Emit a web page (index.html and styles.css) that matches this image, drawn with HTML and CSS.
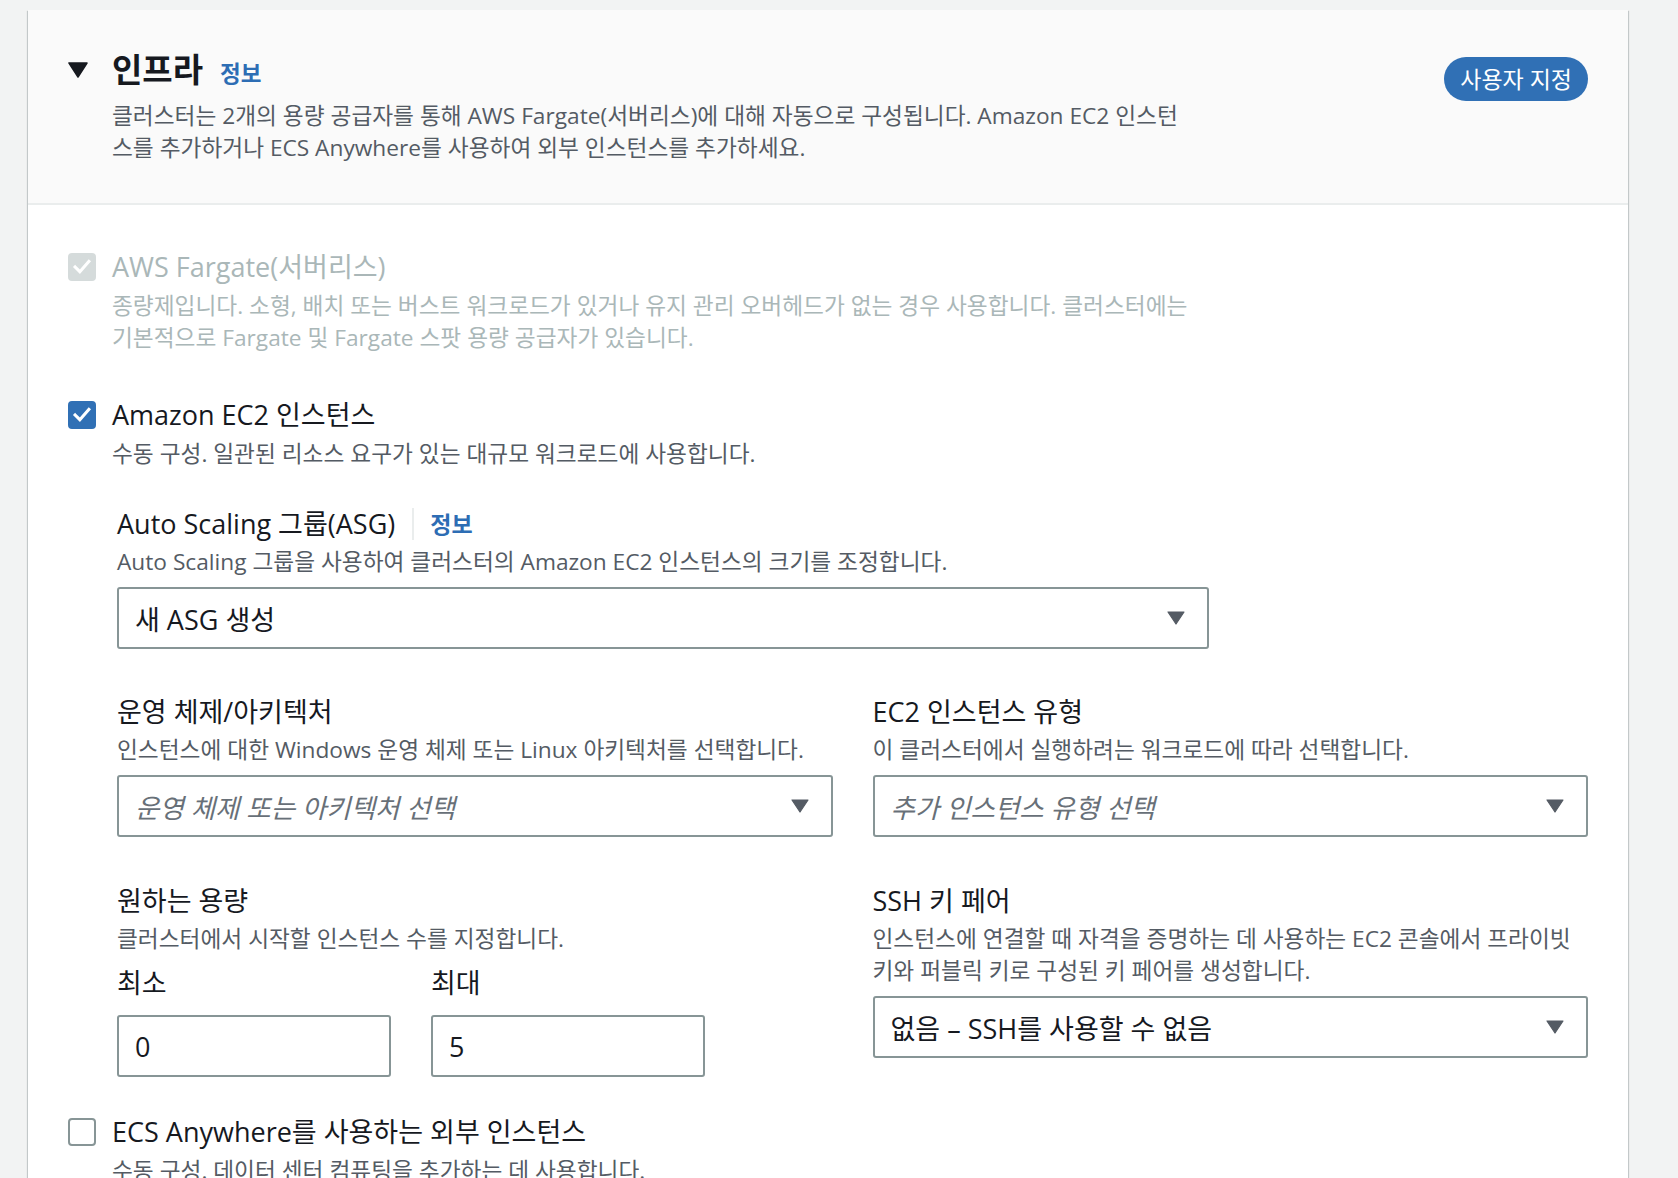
FILE: index.html
```html
<!DOCTYPE html>
<html lang="ko">
<head>
<meta charset="utf-8">
<title>인프라</title>
<link rel="stylesheet" href="styles.css">
</head>
<body>
<div class="page">
  <section class="card">
    <header class="card-header">
      <div class="header-main">
        <svg class="header-caret" width="20" height="16" viewBox="0 0 20 16"><path d="M1 1h18L10 15z" fill="#16191f" stroke="#16191f" stroke-width="1.5" stroke-linejoin="round"/></svg>
        <div class="header-text">
          <div class="title-row">
            <h2 class="title">인프라</h2>
            <a class="info-link info-link-lg">정보</a>
          </div>
          <p class="header-desc">클러스터는 2개의 용량 공급자를 통해 AWS Fargate(서버리스)에 대해 자동으로 구성됩니다. Amazon EC2 인스턴<br>스를 추가하거나 ECS Anywhere를 사용하여 외부 인스턴스를 추가하세요.</p>
        </div>
      </div>
      <span class="badge">사용자 지정</span>
    </header>

    <div class="card-body">
      <div class="option option-disabled">
        <span class="checkbox checkbox-disabled">
          <svg width="28" height="28" viewBox="0 0 28 28"><path d="M6 14l5.5 5.5L22 7.5" fill="none" stroke="#fff" stroke-width="3.6" stroke-linecap="square"/></svg>
        </span>
        <div class="option-content">
          <div class="option-label">AWS Fargate(서버리스)</div>
          <p class="option-desc">종량제입니다. 소형, 배치 또는 버스트 워크로드가 있거나 유지 관리 오버헤드가 없는 경우 사용합니다. 클러스터에는<br>기본적으로 Fargate 및 Fargate 스팟 용량 공급자가 있습니다.</p>
        </div>
      </div>

      <div class="option option-ec2">
        <span class="checkbox checkbox-checked">
          <svg width="28" height="28" viewBox="0 0 28 28"><path d="M6 14l5.5 5.5L22 7.5" fill="none" stroke="#fff" stroke-width="3.6" stroke-linecap="square"/></svg>
        </span>
        <div class="option-content">
          <div class="option-label">Amazon EC2 인스턴스</div>
          <p class="option-desc">수동 구성. 일관된 리소스 요구가 있는 대규모 워크로드에 사용합니다.</p>

          <div class="nested">
            <div class="field field-asg">
              <div class="field-label">Auto Scaling 그룹(ASG)<span class="label-divider"></span><a class="info-link">정보</a></div>
              <p class="field-desc">Auto Scaling 그룹을 사용하여 클러스터의 Amazon EC2 인스턴스의 크기를 조정합니다.</p>
              <div class="select select-asg">
                <span class="select-value">새 ASG 생성</span>
                <svg class="select-caret" width="18" height="14" viewBox="0 0 18 14"><path d="M1 1h16L9 13z" fill="#545b64" stroke="#545b64" stroke-width="1.2" stroke-linejoin="round"/></svg>
              </div>
            </div>

            <div class="field-grid">
              <div class="field">
                <div class="field-label">운영 체제/아키텍처</div>
                <p class="field-desc">인스턴스에 대한 Windows 운영 체제 또는 Linux 아키텍처를 선택합니다.</p>
                <div class="select">
                  <span class="select-placeholder">운영 체제 또는 아키텍처 선택</span>
                  <svg class="select-caret" width="18" height="14" viewBox="0 0 18 14"><path d="M1 1h16L9 13z" fill="#545b64" stroke="#545b64" stroke-width="1.2" stroke-linejoin="round"/></svg>
                </div>
              </div>
              <div class="field">
                <div class="field-label">EC2 인스턴스 유형</div>
                <p class="field-desc">이 클러스터에서 실행하려는 워크로드에 따라 선택합니다.</p>
                <div class="select">
                  <span class="select-placeholder">추가 인스턴스 유형 선택</span>
                  <svg class="select-caret" width="18" height="14" viewBox="0 0 18 14"><path d="M1 1h16L9 13z" fill="#545b64" stroke="#545b64" stroke-width="1.2" stroke-linejoin="round"/></svg>
                </div>
              </div>
              <div class="field">
                <div class="field-label">원하는 용량</div>
                <p class="field-desc">클러스터에서 시작할 인스턴스 수를 지정합니다.</p>
                <div class="minmax">
                  <div class="minmax-item">
                    <div class="field-label">최소</div>
                    <input class="text-input" type="text" value="0">
                  </div>
                  <div class="minmax-item">
                    <div class="field-label">최대</div>
                    <input class="text-input" type="text" value="5">
                  </div>
                </div>
              </div>
              <div class="field">
                <div class="field-label">SSH 키 페어</div>
                <p class="field-desc">인스턴스에 연결할 때 자격을 증명하는 데 사용하는 EC2 콘솔에서 프라이빗<br>키와 퍼블릭 키로 구성된 키 페어를 생성합니다.</p>
                <div class="select">
                  <span class="select-value">없음 – SSH를 사용할 수 없음</span>
                  <svg class="select-caret" width="18" height="14" viewBox="0 0 18 14"><path d="M1 1h16L9 13z" fill="#545b64" stroke="#545b64" stroke-width="1.2" stroke-linejoin="round"/></svg>
                </div>
              </div>
            </div>
          </div>
        </div>
      </div>

      <div class="option option-ecs">
        <span class="checkbox"></span>
        <div class="option-content">
          <div class="option-label">ECS Anywhere를 사용하는 외부 인스턴스</div>
          <p class="option-desc">수동 구성. 데이터 센터 컴퓨팅을 추가하는 데 사용합니다.</p>
        </div>
      </div>
    </div>
  </section>
</div>
</body>
</html>
```

FILE: styles.css
```css
* {
  box-sizing: border-box;
}

html,
body {
  margin: 0;
  padding: 0;
}

body {
  background: #f2f3f3;
  font-family: "Open Sans", "Noto Sans CJK KR", sans-serif;
  color: #16191f;
}

p,
h2 {
  margin: 0;
}

.page {
  padding: 10px 50px 60px 28px;
}

.card {
  width: 1600px;
  background: #ffffff;
  box-shadow: 0 1px 1px 0 rgba(0, 28, 36, 0.3), 1px 1px 1px 0 rgba(0, 28, 36, 0.15), -1px 1px 1px 0 rgba(0, 28, 36, 0.15);
}

/* Header */
.card-header {
  display: flex;
  justify-content: space-between;
  align-items: flex-start;
  background: #fafafa;
  border-bottom: 2px solid #eaeded;
  padding: 40px 40px 39px 40px;
}

.header-main {
  display: flex;
  align-items: flex-start;
  gap: 24px;
}

.header-caret {
  display: block;
  margin-top: 12px;
  flex: none;
}

.title-row {
  display: flex;
  align-items: baseline;
  gap: 17px;
  height: 40px;
  line-height: 40px;
}

.title {
  font-size: 33px;
  font-weight: 700;
  color: #16191f;
}

.info-link {
  font-size: 23px;
  font-weight: 700;
  color: #2d6db4;
  text-decoration: none;
}

.info-link-lg {
  font-size: 22.5px;
}

.header-desc {
  margin-top: 10px;
  font-size: 22.7px;
  line-height: 32px;
  color: #545b64;
  white-space: nowrap;
}

.badge {
  margin-top: 7px;
  height: 44px;
  line-height: 44px;
  padding: 0 16px;
  border-radius: 22px;
  background: #3070b5;
  color: #ffffff;
  font-size: 23px;
  white-space: nowrap;
}

/* Body */
.card-body {
  padding: 44px 40px 40px 40px;
}

.option {
  display: flex;
  align-items: flex-start;
  gap: 16px;
}

.option-ec2 {
  margin-top: 43px;
}

.option-ecs {
  margin-top: 37px;
}

.checkbox {
  flex: none;
  width: 28px;
  height: 28px;
  margin-top: 4px;
  border-radius: 4px;
  border: 2px solid #879596;
  background: #ffffff;
  display: flex;
  align-items: center;
  justify-content: center;
}

.checkbox svg {
  display: block;
}

.checkbox-checked {
  background: #3070b5;
  border-color: #3070b5;
}

.checkbox-disabled {
  background: #d5dbdb;
  border-color: #d5dbdb;
}

.option-content {
  flex: 1;
  min-width: 0;
}

.option-label {
  font-size: 27px;
  line-height: 36px;
  color: #16191f;
}

.option-desc {
  margin-top: 5px;
  font-size: 22.7px;
  line-height: 32px;
  color: #545b64;
  white-space: nowrap;
}

.option-disabled .option-label,
.option-disabled .option-desc {
  color: #aab7b8;
}

/* Nested form fields */
.nested {
  margin-top: 36px;
  padding-left: 5px;
}

.field-label {
  display: flex;
  align-items: center;
  font-size: 27px;
  line-height: 36px;
  color: #16191f;
}

.label-divider {
  display: inline-block;
  width: 2px;
  height: 32px;
  background: #eaeded;
  margin: 0 16px 0 17px;
}

.field-desc {
  margin-top: 4px;
  font-size: 22.7px;
  line-height: 32px;
  color: #545b64;
  white-space: nowrap;
}

.select {
  margin-top: 9px;
  height: 62px;
  border: 2px solid #879596;
  border-radius: 3px;
  background: #ffffff;
  display: flex;
  align-items: center;
  justify-content: space-between;
  padding: 0 22px 0 16px;
  font-size: 27px;
}

.select-asg {
  width: 1092px;
}

.select-value {
  color: #16191f;
}

.select-placeholder {
  color: #687078;
  font-style: italic;
  font-size: 26.5px;
}

.select-caret {
  display: block;
  flex: none;
}

.field-grid {
  margin-top: 45px;
  display: grid;
  grid-template-columns: 1fr 1fr;
  column-gap: 40px;
  row-gap: 46px;
  align-items: start;
}

.minmax {
  display: flex;
  gap: 40px;
  margin-top: 10px;
}

.minmax-item {
  width: 274px;
}

.text-input {
  display: block;
  margin-top: 14px;
  width: 274px;
  height: 62px;
  border: 2px solid #879596;
  border-radius: 3px;
  padding: 0 16px;
  font-family: inherit;
  font-size: 27px;
  color: #16191f;
  background: #ffffff;
  outline: none;
}
```
